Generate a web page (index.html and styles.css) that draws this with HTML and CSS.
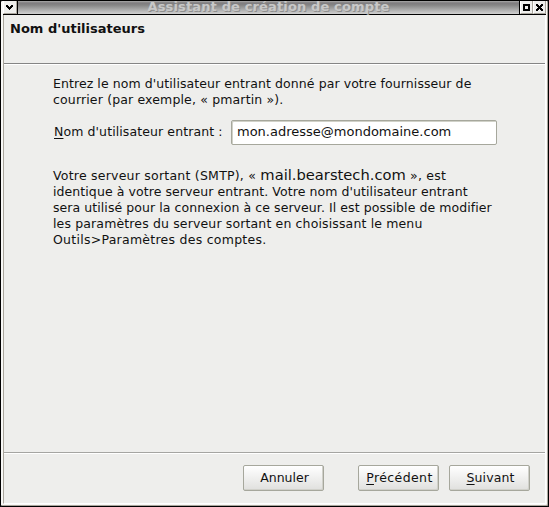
FILE: index.html
```html
<!DOCTYPE html>
<html lang="fr">
<head>
<meta charset="utf-8">
<title>Assistant de création de compte</title>
<link rel="stylesheet" href="styles.css">
</head>
<body>
<div class="window">
  <header class="titlebar">
    <span class="tool menu"><svg width="13" height="13" viewBox="0 0 13 13" shape-rendering="crispEdges"><path d="M2 4h2v1h1v1h1v-1h1v-1h2v2h-1v1h-1v1h-1v1h-1v-1h-1v-1h-1v-1h-1z"/></svg></span>
    <span class="caption"><span class="caption-text">Assistant de création de compte</span></span>
    <span class="tool"><svg width="12" height="13" viewBox="0 0 12 13" shape-rendering="crispEdges"><path fill-rule="evenodd" d="M3 3h7v7h-7zM5 5v3h3v-3z"/></svg></span>
    <span class="tool"><svg width="12" height="13" viewBox="0 0 12 13" shape-rendering="crispEdges"><path d="M3 3h2v1h1v1h1v-1h1v-1h2v2h-1v1h-1v1h1v1h1v2h-2v-1h-1v-1h-1v1h-1v1h-2v-2h1v-1h1v-1h-1v-1h-1z"/></svg></span>
  </header>
  <main class="client">
    <h1 class="heading">Nom d'utilisateurs</h1>
    <section class="content">
      <p class="para"><span class="l1">Entrez le nom d'utilisateur entrant donné par votre fournisseur de</span><br><span class="l2">courrier (par exemple, «&nbsp;pmartin&nbsp;»).</span></p>
      <div class="field">
        <label for="user" class="field-label"><u>N</u>om d'utilisateur entrant :</label>
        <input id="user" class="input" type="text" value="mon.adresse@mondomaine.com">
      </div>
      <p class="para info"><span class="l3">Votre serveur sortant (SMTP), « </span><span class="host">mail.bearstech.com</span><span class="l4"> », est</span><br><span class="l5">identique à votre serveur entrant. Votre nom d'utilisateur entrant</span><br><span class="l6">sera utilisé pour la connexion à ce serveur. Il est possible de modifier</span><br><span class="l7">les paramètres du serveur sortant en choisissant le menu</span><br><span class="l8">Outils&gt;Paramètres des comptes.</span></p>
    </section>
    <footer class="actions">
      <button class="btn cancel">Annuler</button>
      <button class="btn prev"><u>P</u>récédent</button>
      <button class="btn next"><u>S</u>uivant</button>
    </footer>
  </main>
</div>
</body>
</html>
```
FILE: styles.css
```css
* { box-sizing: border-box; }
body { margin: 0; background: #000; font: 12.5px/16px "DejaVu Sans", sans-serif; color: #111; }
.window { width: 549px; height: 507px; display: flex; flex-direction: column; border: 1px solid #000; border-radius: 2px; background: #f8f8f6; padding-left: 2px; box-shadow: inset -1px -1px #aaa69d; padding-right: 2px; padding-bottom: 2px; overflow: hidden; }
.titlebar { height: 14px; display: flex; border-bottom: 1px solid #000; flex: none; }
.tool { display: block; width: 13px; height: 13px; background: #eeeeec; border-right: 1px solid #aaa69d; border-bottom: 1px solid #aaa69d; border-left: 1px solid #fff; flex: none; }
.tool svg { display: block; margin-left: -1px; }
.menu { width: 14px; }
.menu svg { margin-left: 0; }
.caption { flex: 1; height: 13px; border-left: 1px solid #000; border-right: 1px solid #000; background: linear-gradient(#aaa 0, #7e7c7e 2px, #858585 4px, #d0d0d0 13px); text-align: center; }
.caption-text { display: block; font-weight: bold; font-size: 13px; line-height: 12px; letter-spacing: .14px; color: #c8c8c8; text-shadow: 1px 1px 0 #8e8e8e; white-space: nowrap; }
.client { flex: 1; display: flex; flex-direction: column; border-left: 1px solid #aaa69d; border-right: 1px solid #fff; border-bottom: 1px solid #fff; background: #eeeeec; }
.heading { margin: 0; height: 49px; padding: 6px 0 0 6px; font-size: 13px; line-height: 16px; border-bottom: 1px solid #858585; box-shadow: 0 1px #fff; flex: none; }
.content { flex: 1; padding: 12px 47px 0 49px; }
.para { margin: 0; white-space: nowrap; }
.l1, .l5 { letter-spacing: .08px; }
.l2 { letter-spacing: .15px; }
.field-label { letter-spacing: .1px; }
.l3 { letter-spacing: .23px; }
.l4 { letter-spacing: .25px; }
.l6 { letter-spacing: .07px; }
.l7 { letter-spacing: .14px; }
.l8 { letter-spacing: .26px; }
.field { display: flex; height: 25px; margin-top: 12px; align-items: center; }
.field-label { width: 178px; padding: 0 0 2px 1px; white-space: nowrap; }
.input { width: 266px; height: 25px; margin: 0; padding: 0 5px 2px; border: 1px solid #a6a79c; box-shadow: inset 1px 1px #d0d1c8; border-radius: 2px; font: inherit; font-size: 13px; color: #111; background: #fff; outline: none; }
.info { margin-top: 23px; }
.host { font-size: 14.7px; line-height: 14px; }
.actions { height: 51px; flex: none; display: flex; justify-content: flex-end; gap: 10px; padding: 12px 15px 0 0; border-top: 1px solid #a5a5a2; box-shadow: inset 0 1px #fff; }
.btn { width: 81px; height: 26px; padding: 0 0 1px; border: 1px solid #a6a79c; border-radius: 2px; font: inherit; color: #111; background: linear-gradient(#fff, #e0e0de); box-shadow: inset -1px -1px #d0d0ca; }
.cancel { margin-right: 24px; padding-left: 2px; }
.prev { letter-spacing: .4px; padding-left: 2px; }
.next { letter-spacing: .1px; padding-left: 2px; }
u { text-decoration: underline; text-underline-offset: 2px; text-decoration-thickness: 1px; }
```
